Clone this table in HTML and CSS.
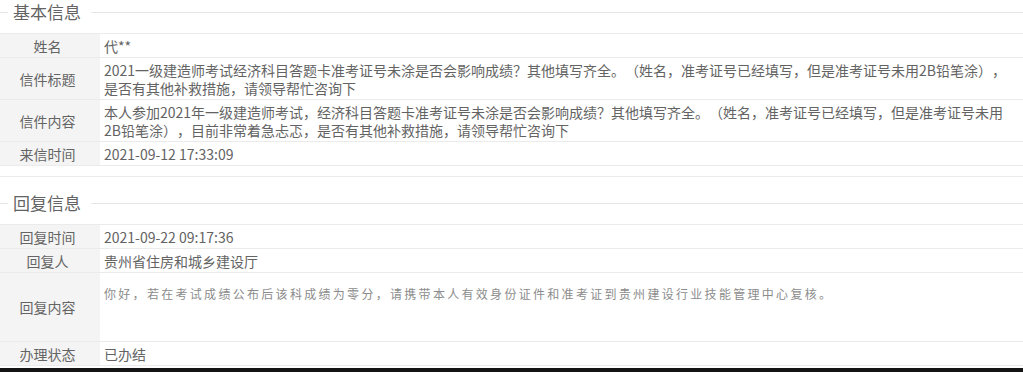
FILE: index.html
```html
<!DOCTYPE html>
<html lang="zh-CN">
<head>
<meta charset="utf-8">
<title>信件详情</title>
<link rel="stylesheet" href="styles.css">
</head>
<body>
<div class="page">
  <section class="block block-first">
    <div class="legend"><span class="legend-text">基本信息</span></div>
    <div class="info">
      <div class="row">
        <div class="label">姓名</div>
        <div class="value">代**</div>
      </div>
      <div class="row">
        <div class="label">信件标题</div>
        <div class="value">2021一级建造师考试经济科目答题卡准考证号未涂是否会影响成绩？其他填写齐全。（姓名，准考证号已经填写，但是准考证号未用2B铅笔涂），是否有其他补救措施，请领导帮忙咨询下</div>
      </div>
      <div class="row">
        <div class="label">信件内容</div>
        <div class="value">本人参加2021年一级建造师考试，经济科目答题卡准考证号未涂是否会影响成绩？其他填写齐全。（姓名，准考证号已经填写，但是准考证号未用2B铅笔涂），目前非常着急忐忑，是否有其他补救措施，请领导帮忙咨询下</div>
      </div>
      <div class="row">
        <div class="label">来信时间</div>
        <div class="value">2021-09-12 17:33:09</div>
      </div>
    </div>
  </section>
  <section class="block">
    <div class="legend"><span class="legend-text">回复信息</span></div>
    <div class="info">
      <div class="row">
        <div class="label">回复时间</div>
        <div class="value">2021-09-22 09:17:36</div>
      </div>
      <div class="row">
        <div class="label">回复人</div>
        <div class="value">贵州省住房和城乡建设厅</div>
      </div>
      <div class="row row-tall">
        <div class="label">回复内容</div>
        <div class="value value-reply"><p class="reply">你好，若在考试成绩公布后该科成绩为零分，请携带本人有效身份证件和准考证到贵州建设行业技能管理中心复核。</p></div>
      </div>
      <div class="row">
        <div class="label">办理状态</div>
        <div class="value">已办结</div>
      </div>
    </div>
  </section>
  <div class="bottom-bar"></div>
</div>
</body>
</html>
```

FILE: styles.css
```css
html, body {
  margin: 0;
  padding: 0;
  background: #ffffff;
}

body {
  font-family: "Noto Sans CJK SC", "Noto Sans", sans-serif;
  font-size: 14px;
  color: #636363;
  text-spacing-trim: space-all;
}

.page {
  width: 1023px;
  height: 372px;
  overflow: hidden;
  display: flex;
  flex-direction: column;
}

.block-first {
  padding-bottom: 10px;
  border-bottom: 1px solid #ebebeb;
  margin-bottom: 14px;
}

.legend {
  display: flex;
  align-items: center;
  height: 24px;
  margin-bottom: 9px;
}

.legend::before {
  content: "";
  width: 8px;
  height: 1px;
  background: #e6e6e6;
}

.legend::after {
  content: "";
  flex: 1;
  height: 1px;
  background: #e6e6e6;
}

.legend-text {
  font-size: 17px;
  line-height: 24px;
  color: #636363;
  padding: 0 10px 0 5px;
}

.info {
  border-bottom: 1px solid #ebebeb;
}

.row {
  display: grid;
  grid-template-columns: 100px 1fr;
  border-top: 1px solid #ebebeb;
}

.label {
  background: #f4f4f4;
  display: flex;
  align-items: center;
  justify-content: center;
  padding-right: 5px;
  line-height: 18px;
  color: #646464;
}

.value {
  background: #ffffff;
  padding: 3px 11px 2px 4px;
  line-height: 18px;
  color: #636363;
}

.value-reply {
  height: 68px;
  box-sizing: border-box;
  padding: 12px 11px 0 4px;
}

.reply {
  margin: 0;
  font-size: 12px;
  line-height: 18px;
  letter-spacing: 2.3px;
  color: #8c8c8c;
}

.bottom-bar {
  margin-top: auto;
  height: 4px;
  background: #141414;
}
```
